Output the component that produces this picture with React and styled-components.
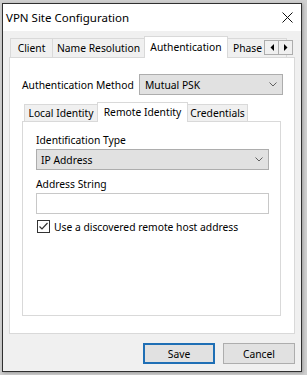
import React from "react";
import styled, { createGlobalStyle } from "styled-components";

const FONT = `"Noto Sans", "Segoe UI", sans-serif`;

const Global = createGlobalStyle`
  html, body { margin: 0; padding: 0; }
  body { background: #cfcfcf; overflow: hidden; }
  #root { width: 307px; height: 375px; }
`;

const Screen = styled.div`
  width: 307px;
  height: 375px;
  box-sizing: border-box;
  padding: 3px 0 0 2px;
  background: #cfcfcf;
  font-family: ${FONT};
  font-size: 10.3px;
  color: #000;
`;

const Dialog = styled.div`
  width: 300px;
  height: 369px;
  box-sizing: border-box;
  border: 1px solid #303030;
  background: #f0f0f0;
  display: flex;
  flex-direction: column;
  box-shadow: 1px 1px 3px rgba(0, 0, 0, 0.25);
`;

const TitleBar = styled.div`
  height: 27px;
  flex-shrink: 0;
  background: #fff;
  display: flex;
  align-items: center;
  padding-left: 3px;
`;

const Title = styled.div`
  flex: 1;
  font-size: 11.5px;
  line-height: 16px;
`;

const CloseBtn = styled.div`
  width: 27px;
  height: 27px;
  display: flex;
  align-items: center;
  justify-content: center;
`;

const Body = styled.div`
  flex: 1;
  display: flex;
  flex-direction: column;
  padding: 5px 6px 7px 6px;
`;

const TabStrip = styled.div`
  position: relative;
  z-index: 1;
  height: ${(p) => p.$h}px;
  margin-bottom: -1px;
  display: flex;
  align-items: flex-start;
  padding-left: ${(p) => p.$pad}px;
  flex-shrink: 0;
  overflow: hidden;
`;

const Tab = styled.div`
  position: relative;
  box-sizing: border-box;
  width: ${(p) => p.$w}px;
  height: ${(p) => (p.$active ? p.$h + 3 : p.$h)}px;
  margin-top: ${(p) => (p.$active ? 0 : 2)}px;
  margin-left: ${(p) => (p.$first ? 0 : -1)}px;
  z-index: ${(p) => (p.$active ? 2 : 1)};
  border: 1px solid #d9d9d9;
  border-bottom: none;
  background: ${(p) => (p.$active ? "#fff" : "#f0f0f0")};
  display: flex;
  align-items: center;
  justify-content: ${(p) => (p.$left ? "flex-start" : "center")};
  padding-left: ${(p) => (p.$left ? 5 : 0)}px;
  padding-bottom: ${(p) => (p.$active ? 1 : 0)}px;
  white-space: nowrap;
  flex-shrink: 0;
  line-height: 16px;
`;

const Scroller = styled.div`
  position: absolute;
  right: 2px;
  top: 4px;
  z-index: 3;
  display: flex;
`;

const ScrollBtn = styled.div`
  width: 15px;
  height: 15px;
  box-sizing: border-box;
  border: 1px solid #adadad;
  margin-left: ${(p) => (p.$second ? -1 : 0)}px;
  background: #f0f0f0;
  display: flex;
  align-items: center;
  justify-content: center;
`;

const Panel = styled.div`
  height: 277px;
  box-sizing: border-box;
  flex-shrink: 0;
  border: 1px solid #d9d9d9;
  background: #fff;
  padding: 16px 11px 17px 12px;
  display: flex;
  flex-direction: column;
`;

const FieldRow = styled.div`
  display: flex;
  align-items: center;
  height: 21px;
  flex-shrink: 0;
`;

const RowLabel = styled.div`
  width: 117px;
  flex-shrink: 0;
  white-space: nowrap;
  line-height: 16px;
`;

const Select = styled.div`
  flex: ${(p) => (p.$grow ? "1 1 auto" : "0 0 auto")};
  height: 21px;
  box-sizing: border-box;
  border: 1px solid #adadad;
  background: #e1e1e1;
  display: flex;
  align-items: center;
  padding: 0 5px 0 ${(p) => p.$pad}px;
  line-height: 16px;
`;

const SelectText = styled.span`
  flex: 1;
  white-space: nowrap;
`;

const InnerTabs = styled.div`
  margin-top: 7px;
  display: flex;
  flex-direction: column;
  flex: 1;
  margin-right: 2px;
`;

const InnerPanel = styled.div`
  flex: 1;
  box-sizing: border-box;
  border: 1px solid #d9d9d9;
  background: #fff;
  padding: 10px 11px 0 13px;
  display: flex;
  flex-direction: column;
`;

const FieldLabel = styled.div`
  line-height: 17px;
  height: 17px;
  margin-top: ${(p) => p.$mt || 0}px;
  white-space: nowrap;
`;

const TextInput = styled.div`
  height: 21px;
  flex-shrink: 0;
  box-sizing: border-box;
  border: 1px solid #c8c8c8;
  background: #fff;
`;

const CheckRow = styled.div`
  margin-top: 6px;
  height: 13px;
  display: flex;
  align-items: center;
  line-height: 16px;
`;

const Check = styled.div`
  width: 13px;
  height: 13px;
  box-sizing: border-box;
  margin-left: 1px;
  border: 1px solid #333;
  background: #fff;
  display: flex;
  align-items: center;
  justify-content: center;
  flex-shrink: 0;
`;

const CheckLabel = styled.span`
  margin-left: 4px;
  white-space: nowrap;
`;

const ButtonRow = styled.div`
  margin-top: 9px;
  display: flex;
  justify-content: flex-end;
  gap: 8px;
`;

const Button = styled.div`
  width: 72px;
  height: 21px;
  box-sizing: border-box;
  border: ${(p) => (p.$default ? "2px solid #1f6fb5" : "1px solid #adadad")};
  background: #e1e1e1;
  display: flex;
  align-items: center;
  justify-content: center;
  line-height: 16px;
`;

const Chevron = () => (
  <svg width="8" height="5" viewBox="0 0 8 5">
    <polyline points="0.5,0.5 4,4 7.5,0.5" fill="none" stroke="#606060" strokeWidth="1" />
  </svg>
);

const Arrow = ({ dir }) => (
  <svg width="4" height="7" viewBox="0 0 4 7">
    {dir === "left" ? (
      <polygon points="4,0 4,7 0.5,3.5" fill="#000" />
    ) : (
      <polygon points="0,0 0,7 3.5,3.5" fill="#000" />
    )}
  </svg>
);

export default function App() {
  return (
    <>
      <Global />
      <Screen>
        <Dialog>
          <TitleBar>
            <Title>VPN Site Configuration</Title>
            <CloseBtn>
              <svg width="11" height="11" viewBox="0 0 11 11">
                <path d="M0.5 0.5 L10.5 10.5 M10.5 0.5 L0.5 10.5" stroke="#111" strokeWidth="1" />
              </svg>
            </CloseBtn>
          </TitleBar>
          <Body>
            <TabStrip $h={22} $pad={1}>
              <Tab $w={43} $h={19} $first>Client</Tab>
              <Tab $w={93} $h={19}>Name Resolution</Tab>
              <Tab $w={84} $h={19} $active>Authentication</Tab>
              <Tab $w={60} $h={19} $left>Phase 1</Tab>
              <Scroller>
                <ScrollBtn><Arrow dir="left" /></ScrollBtn>
                <ScrollBtn $second><Arrow dir="right" /></ScrollBtn>
              </Scroller>
            </TabStrip>
            <Panel>
              <FieldRow>
                <RowLabel>Authentication Method</RowLabel>
                <Select $grow $pad={5}>
                  <SelectText>Mutual PSK</SelectText>
                  <Chevron />
                </Select>
              </FieldRow>
              <InnerTabs>
                <TabStrip $h={20} $pad={2}>
                  <Tab $w={74} $h={17} $first>Local Identity</Tab>
                  <Tab $w={91} $h={17} $active>Remote Identity</Tab>
                  <Tab $w={61} $h={17}>Credentials</Tab>
                </TabStrip>
                <InnerPanel>
                  <FieldLabel>Identification Type</FieldLabel>
                  <Select $pad={4}>
                    <SelectText>IP Address</SelectText>
                    <Chevron />
                  </Select>
                  <FieldLabel $mt={6}>Address String</FieldLabel>
                  <TextInput />
                  <CheckRow>
                    <Check>
                      <svg width="11" height="11" viewBox="0 0 11 11">
                        <polyline points="1.5,5.5 4,8 9.5,2" fill="none" stroke="#333" strokeWidth="1.2" />
                      </svg>
                    </Check>
                    <CheckLabel>Use a discovered remote host address</CheckLabel>
                  </CheckRow>
                </InnerPanel>
              </InnerTabs>
            </Panel>
            <ButtonRow>
              <Button $default>Save</Button>
              <Button>Cancel</Button>
            </ButtonRow>
          </Body>
        </Dialog>
      </Screen>
    </>
  );
}
